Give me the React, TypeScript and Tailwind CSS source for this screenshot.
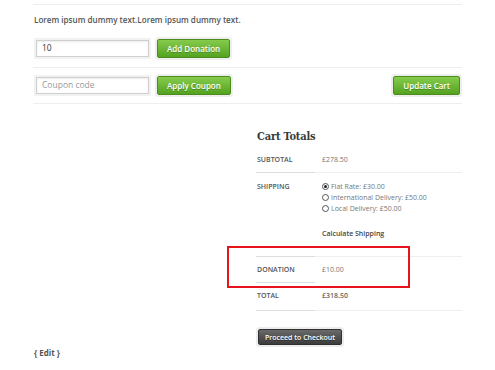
import React from 'react';

const greenBtn =
  "h-[19px] px-[9px] rounded-[2px] border border-[#4b8d1c] bg-gradient-to-b from-[#86cc4c] to-[#54a21f] text-white text-[8px] font-semibold leading-none shadow-[0_0_0_2px_#eeeeee] [text-shadow:0_1px_0_rgba(0,0,0,0.25)]";

const inputBox =
  "w-[113px] h-[17px] border border-[#cfcfcf] bg-white px-[5px] text-[8.5px] leading-none shadow-[0_0_0_2px_#f2f2f2,inset_0_1px_2px_rgba(0,0,0,0.08)] flex items-center";

const Radio = ({ checked }: { checked?: boolean }) => (
  <span className="w-[7px] h-[7px] rounded-full border border-[#555] bg-white flex items-center justify-center mr-[2px] shrink-0">
    {checked && <span className="w-[3px] h-[3px] rounded-full bg-[#222]" />}
  </span>
);

const rowLine = (full = true) => (
  <div className="flex">
    <div className="w-[59px] border-t border-[#dedede]" />
    {full && <div className="flex-1 border-t border-[#efefef]" />}
  </div>
);

export default function App() {
  return (
    <div className="relative w-[495px] h-[370px] bg-white overflow-hidden font-['Open_Sans',sans-serif] text-[#555]">
      {/* cart actions */}
      <div className="ml-[33px] w-[429px] pt-[4px]">
        <div className="border-t border-[#eeeeee]" />
        <p className="mt-[10px] ml-[1px] text-[8.1px] leading-[10px] font-semibold text-[#555]">
          Lorem ipsum dummy text.Lorem ipsum dummy text.
        </p>
        <div className="mt-[14px] ml-[3px] flex items-center gap-[8px]">
          <div className={inputBox + " text-[#333]"}>10</div>
          <button className={greenBtn}>Add Donation</button>
        </div>
        <div className="mt-[9px] border-t border-[#eeeeee]" />
        <div className="mt-[8px] ml-[3px] mr-[2px] flex items-center">
          <div className={inputBox + " text-[#999]"}>Coupon code</div>
          <button className={greenBtn + " ml-[8px]"}>Apply Coupon</button>
          <button className={greenBtn + " ml-auto px-[8px]"}>Update Cart</button>
        </div>
        <div className="mt-[8px] border-t border-[#eeeeee]" />
      </div>

      {/* cart totals */}
      <div className="ml-[256px] w-[206px]">
        <h2 className="mt-[26px] text-[11px] leading-[14px] font-bold text-[#3a3a3a] font-['DejaVu_Serif_Condensed','DejaVu_Serif',serif] tracking-[-0.2px] ml-[1px]">
          Cart Totals
        </h2>

        <div className="mt-[3px] flex h-[25px] pt-[8px] text-[7px] leading-[10px]">
          <div className="w-[66px] pl-[1px] font-semibold uppercase text-[#555]">Subtotal</div>
          <div className="text-[#777]">£278.50</div>
        </div>
        {rowLine()}

        <div className="flex text-[7px] leading-[10px] h-[83px]">
          <div className="w-[66px] pl-[1px] pt-[9px] font-semibold uppercase text-[#555]">Shipping</div>
          <div className="pt-[8px] text-[#777]">
            <div className="flex items-center h-[11px]">
              <Radio checked />
              Flat Rate: £30.00
            </div>
            <div className="flex items-center h-[11px]">
              <Radio />
              International Delivery: £50.00
            </div>
            <div className="flex items-center h-[11px]">
              <Radio />
              Local Delivery: £50.00
            </div>
            <div className="mt-[15px] font-semibold text-[#444]">Calculate Shipping</div>
          </div>
        </div>
        {rowLine()}

        <div className="flex h-[25px] pt-[8px] text-[7px] leading-[10px]">
          <div className="w-[66px] pl-[1px] font-semibold uppercase text-[#555]">Donation</div>
          <div className="text-[#777]">£10.00</div>
        </div>
        {rowLine(false)}

        <div className="flex h-[27px] pt-[8px] text-[7px] leading-[10px]">
          <div className="w-[66px] pl-[1px] font-semibold uppercase text-[#555]">Total</div>
          <div className="text-[#666] font-semibold">£318.50</div>
        </div>
        {rowLine()}

        <button className="mt-[18px] ml-[2px] w-[84px] h-[16px] rounded-[2px] border border-[#2f2f2f] bg-gradient-to-b from-[#6a6a6a] to-[#3c3c3c] text-white text-[7px] font-semibold leading-none shadow-[0_0_0_2px_#ececec] [text-shadow:0_1px_0_rgba(0,0,0,0.4)]">
          Proceed to Checkout
        </button>
      </div>

      <p className="ml-[34px] mt-[2px] text-[8px] leading-[10px] font-bold text-[#555]">{'{ Edit }'}</p>

      {/* highlight annotation */}
      <div className="absolute left-[227px] top-[246px] w-[183px] h-[42px] border-2 border-[#e8141c]" />
    </div>
  );
}
